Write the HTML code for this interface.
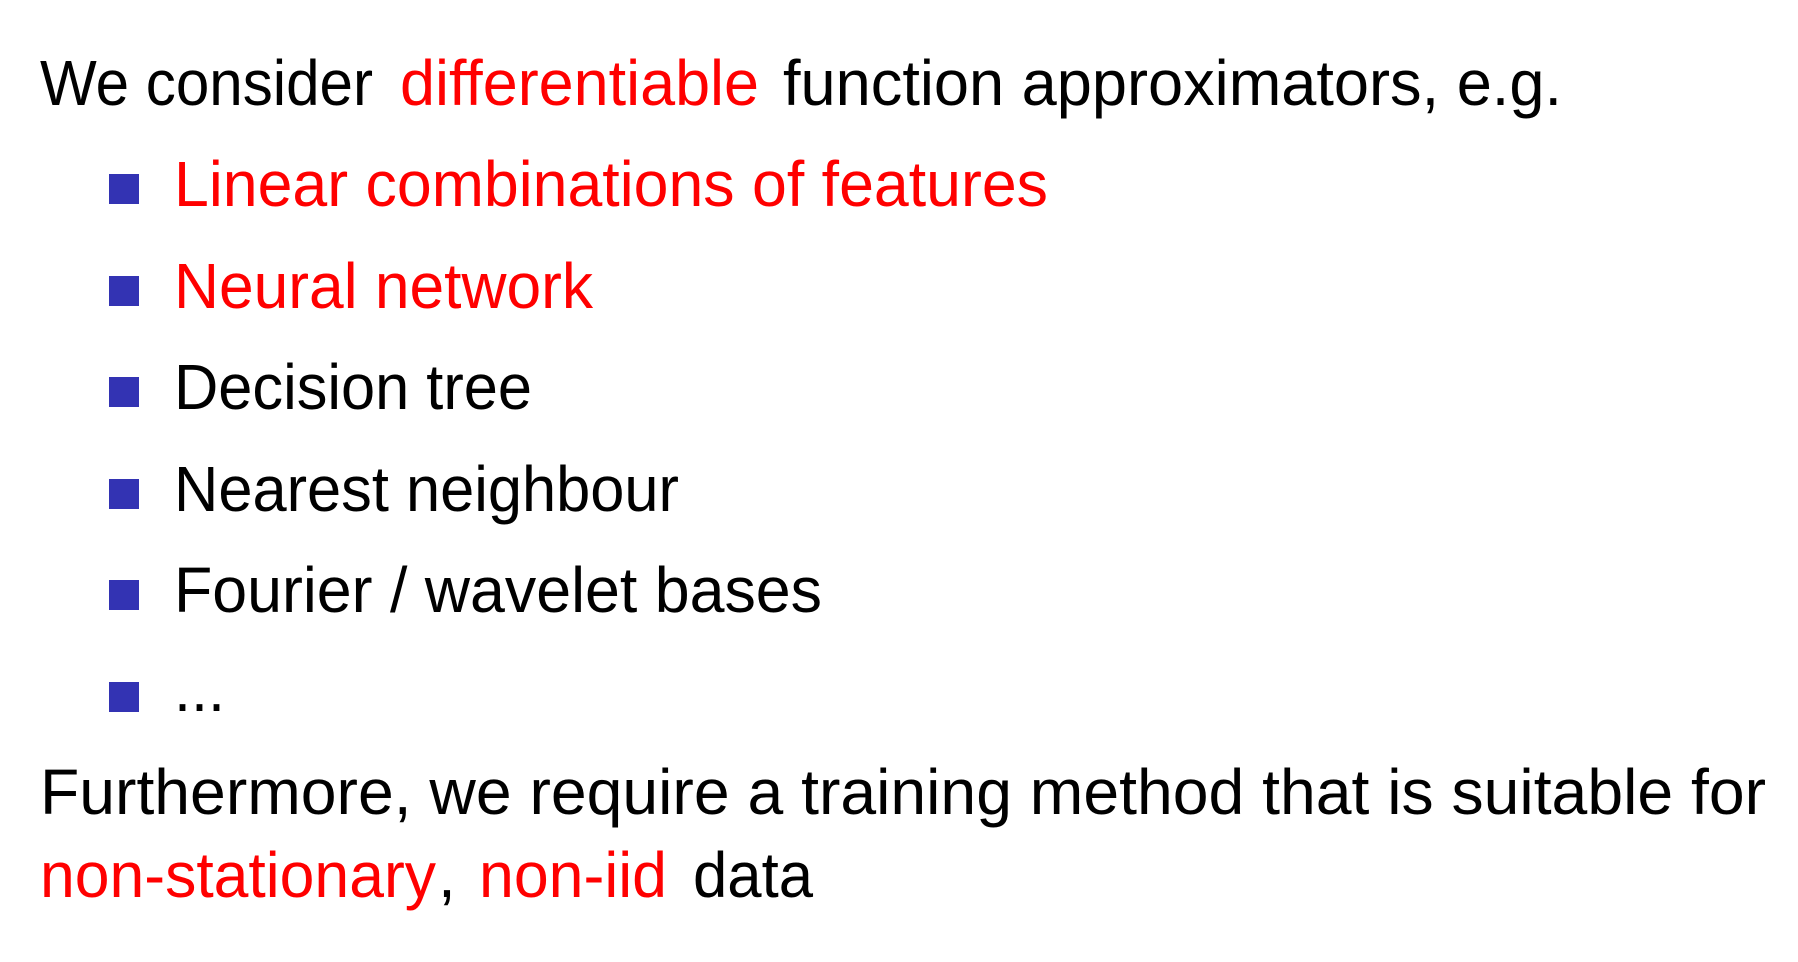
<!DOCTYPE html>
<html><head><meta charset="utf-8"><style>
html,body{margin:0;padding:0;background:#fff;}
svg{display:block;}
text{font-family:"Liberation Sans",sans-serif;font-size:64px;}
</style></head><body>
<svg width="1798" height="962" viewBox="0 0 1798 962" xmlns="http://www.w3.org/2000/svg">
<rect width="1798" height="962" fill="#fff"/>
<text x="40" y="105" textLength="333" lengthAdjust="spacingAndGlyphs" fill="#000">We consider</text>
<text x="400" y="105" textLength="359" lengthAdjust="spacingAndGlyphs" fill="#ff0000">differentiable</text>
<text x="783" y="105" textLength="779" lengthAdjust="spacingAndGlyphs" fill="#000">function approximators, e.g.</text>

<g fill="#3333b3">
<rect x="109" y="174" width="30" height="30"/>
<rect x="109" y="276" width="30" height="30"/>
<rect x="109" y="377" width="30" height="30"/>
<rect x="109" y="479" width="30" height="30"/>
<rect x="109" y="580" width="30" height="30"/>
<rect x="109" y="682" width="30" height="30"/>
</g>
<text x="174" y="206" textLength="874" lengthAdjust="spacingAndGlyphs" fill="#ff0000">Linear combinations of features</text>
<text x="174" y="308" textLength="419" lengthAdjust="spacingAndGlyphs" fill="#ff0000">Neural network</text>
<text x="174" y="409" textLength="358" lengthAdjust="spacingAndGlyphs" fill="#000">Decision tree</text>
<text x="174" y="511" textLength="505" lengthAdjust="spacingAndGlyphs" fill="#000">Nearest neighbour</text>
<text x="174" y="612" textLength="648" lengthAdjust="spacingAndGlyphs" fill="#000">Fourier / wavelet bases</text>
<text x="174" y="711" textLength="51" lengthAdjust="spacingAndGlyphs" fill="#000">...</text>

<text x="40" y="814" textLength="1726" lengthAdjust="spacingAndGlyphs" fill="#000">Furthermore, we require a training method that is suitable for</text>
<text x="40" y="897" textLength="396" lengthAdjust="spacingAndGlyphs" fill="#ff0000">non-stationary</text>
<text x="438" y="897" fill="#000">,</text>
<text x="479" y="897" textLength="188" lengthAdjust="spacingAndGlyphs" fill="#ff0000">non-iid</text>
<text x="693" y="897" textLength="120" lengthAdjust="spacingAndGlyphs" fill="#000">data</text>
</svg>
</body></html>
